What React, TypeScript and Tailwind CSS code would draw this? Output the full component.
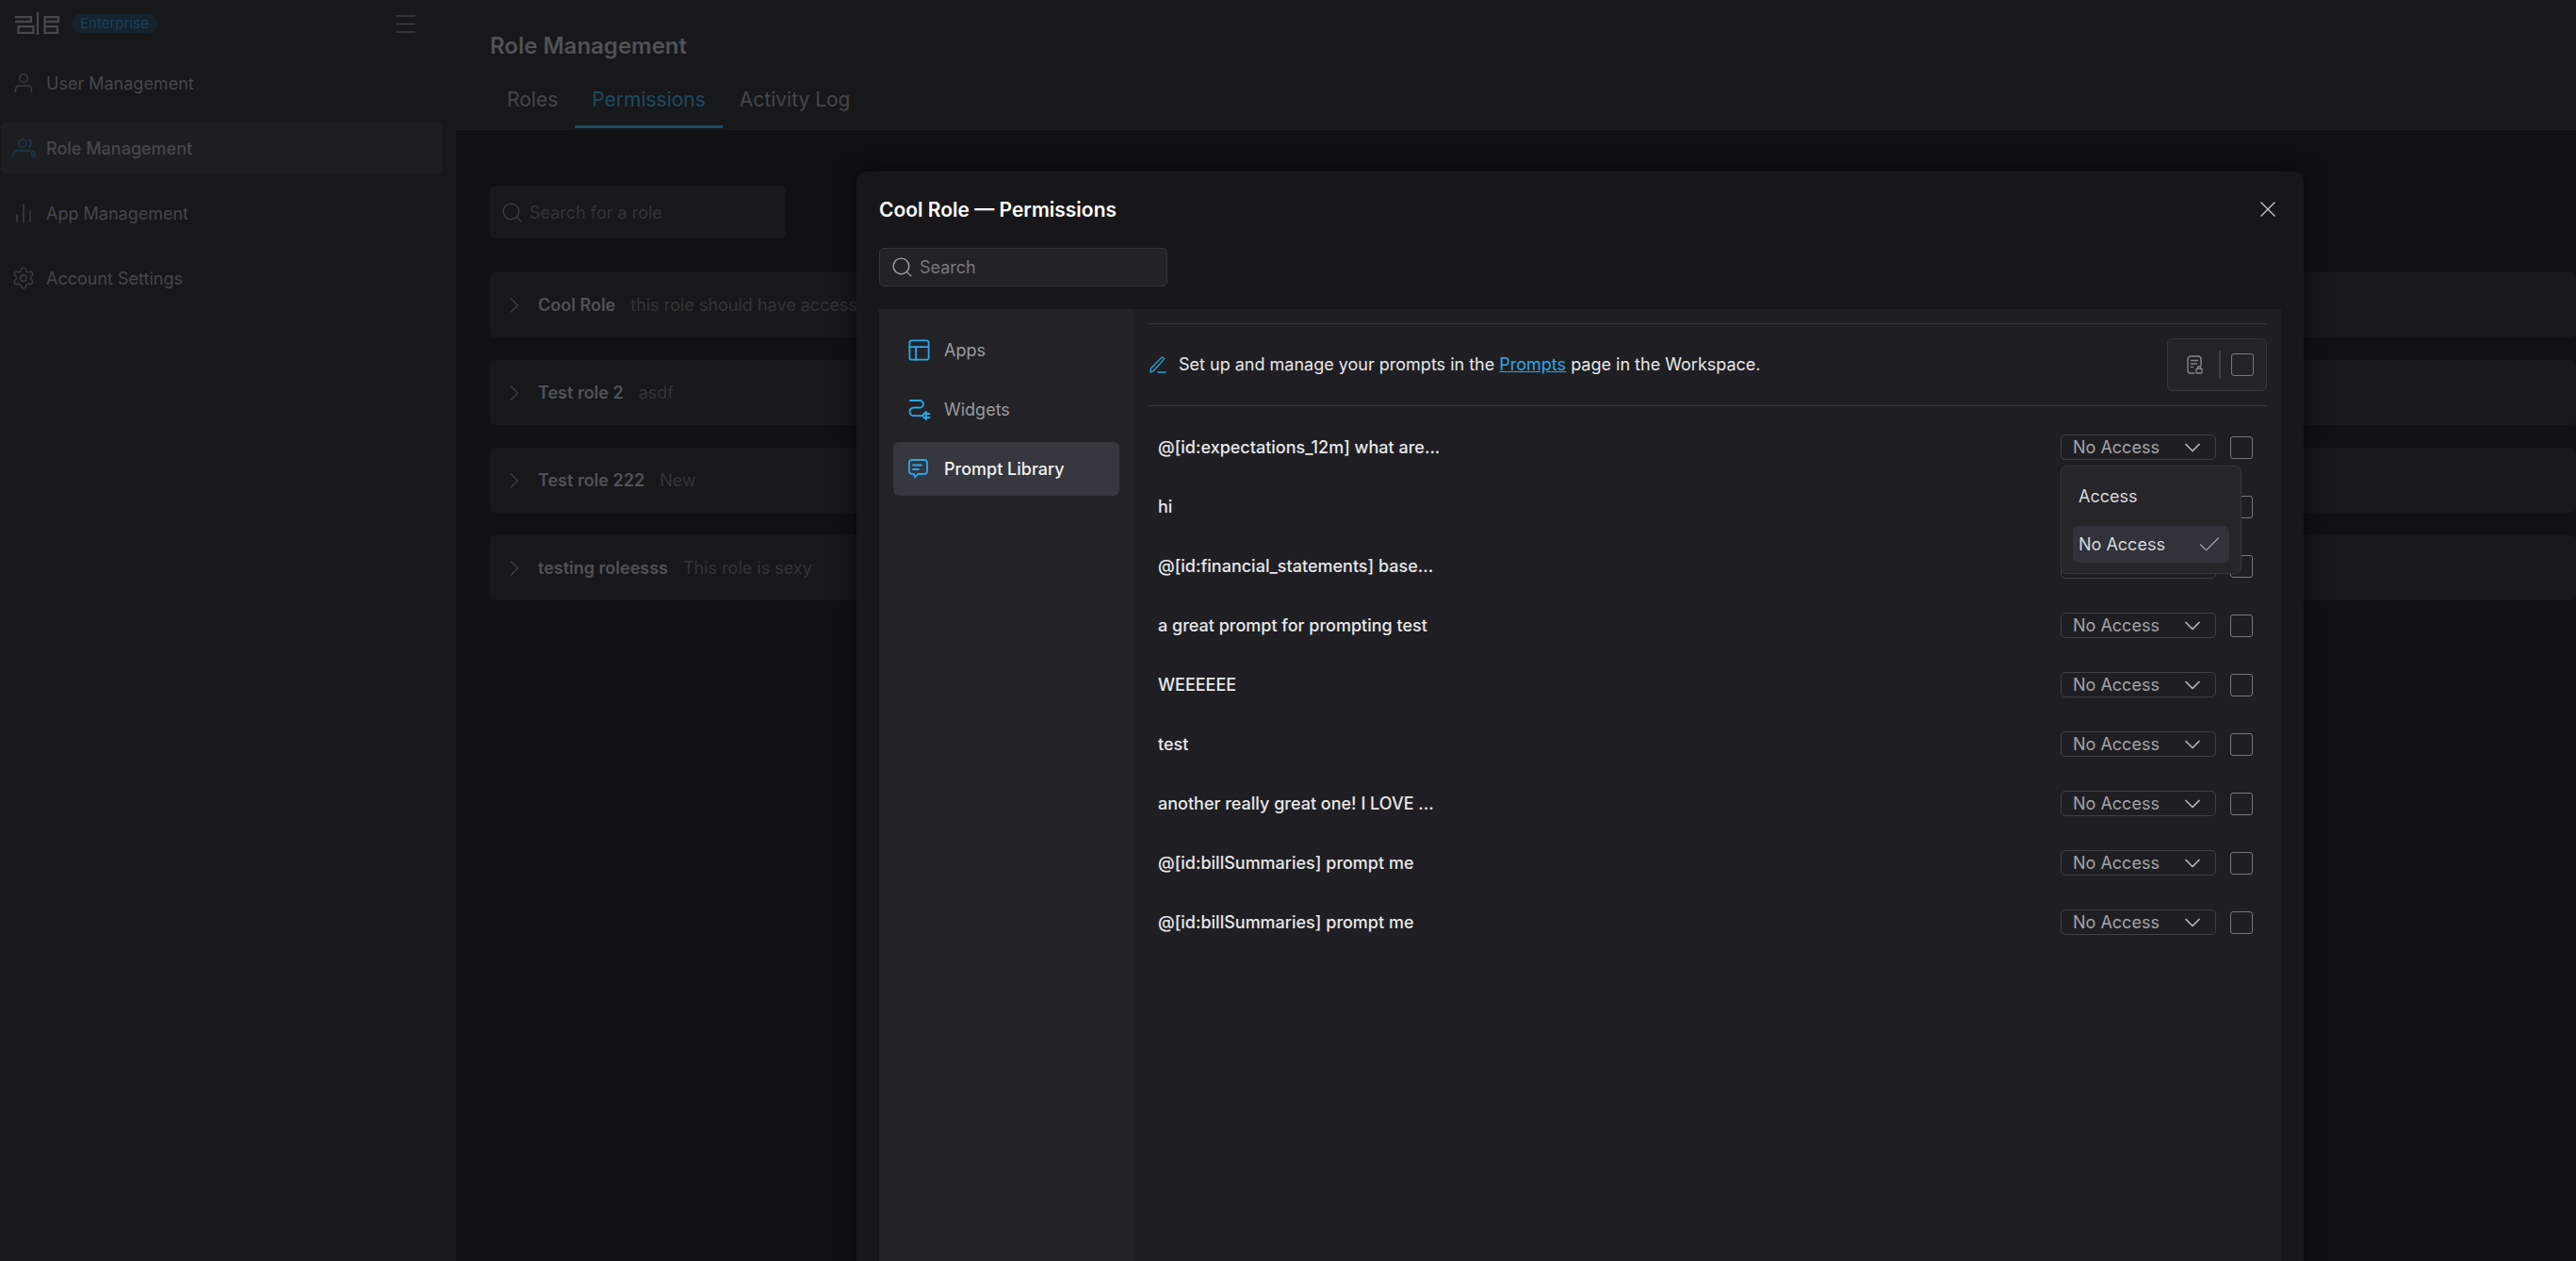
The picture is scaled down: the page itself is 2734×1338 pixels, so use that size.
import { Search, ChevronRight, ChevronDown, Check, X, Menu, Settings, PanelsTopLeft } from "lucide-react";

const roles = [
  { name: "Cool Role", desc: "this role should have access to all the cool things" },
  { name: "Test role 2", desc: "asdf" },
  { name: "Test role 222", desc: "New" },
  { name: "testing roleesss", desc: "This role is sexy" },
];

const prompts = [
  "@[id:expectations_12m] what are...",
  "hi",
  "@[id:financial_statements] base...",
  "a great prompt for prompting test",
  "WEEEEEE",
  "test",
  "another really great one! I LOVE ...",
  "@[id:billSummaries] prompt me",
  "@[id:billSummaries] prompt me",
];

function Logo() {
  return (
    <svg width="48" height="24" viewBox="0 0 48 24" fill="none" stroke="#47484b" strokeWidth="2.3">
      <path d="M0 5.200h17v4.800H0" />
      <path d="M3.500 15.200h16v6.600h-16z" />
      <path d="M24 0v24" strokeWidth="2.200" />
      <path d="M31.500 10h14.500V5.200H31.500v16.600h13.500v-6.600H31.500" />
    </svg>
  );
}

function UserIcon() {
  return (
    <svg width="20" height="20" viewBox="0 0 20 20" fill="none" stroke="#3c3e42" strokeWidth="1.4" strokeLinecap="round">
      <circle cx="10" cy="5" r="4.200" />
      <path d="M1.500 19.500V17a4 4 0 0 1 4-4h9a4 4 0 0 1 4 4v2.500" />
    </svg>
  );
}

function UsersIcon() {
  return (
    <svg width="25" height="20" viewBox="0 0 25 20" fill="none" stroke="#1d3a4c" strokeWidth="1.4" strokeLinecap="round">
      <circle cx="11" cy="5" r="4.200" />
      <path d="M1 19.500V17a4 4 0 0 1 4-4h12a4 4 0 0 1 4 4v2.500" />
      <path d="M17.500 1a4.300 4.300 0 0 1 0 8M21 13a4 4 0 0 1 3 4v2" />
    </svg>
  );
}

function BarsIcon() {
  return (
    <svg width="20" height="20" viewBox="0 0 20 20" fill="none" stroke="#3c3e42" strokeWidth="1.5" strokeLinecap="round">
      <path d="M3 19v-7M10 19V1M17 19V8" />
    </svg>
  );
}

function WidgetIcon() {
  return (
    <svg width="24" height="24" viewBox="0 0 24 24" fill="none" stroke="#2aa8e8" strokeWidth="1.8" strokeLinecap="round" strokeLinejoin="round">
      <path d="M2 2h10a4 4 0 0 1 4 4 3.500 3.500 0 0 1-4 3.500H6a4.300 4.300 0 0 0-4.500 4.500A4.300 4.300 0 0 0 6 18.200h9" />
      <path d="M15 18l4-4v8zM19 16h3.500M19 20h3.500" />
    </svg>
  );
}

function PromptIcon() {
  return (
    <svg width="21" height="21" viewBox="0 0 21 21" fill="none" stroke="#2aa8e8" strokeWidth="1.8" strokeLinecap="round" strokeLinejoin="round">
      <path d="M4 1h13a3 3 0 0 1 3 3v9a3 3 0 0 1-3 3h-7l-3 3.500L6 16H4a3 3 0 0 1-3-3V4a3 3 0 0 1 3-3z" />
      <path d="M5 6.500h9M5 11h6" />
    </svg>
  );
}

function PencilIcon() {
  return (
    <svg width="18" height="18" viewBox="0 0 18 18" fill="none" stroke="#2aa8e8" strokeWidth="1.3" strokeLinecap="round" strokeLinejoin="round">
      <path d="M1 17l.6-4.200L12.600 1.600a1.600 1.600 0 0 1 2.300 0 1.600 1.600 0 0 1 0 2.300L4 15.800z" />
      <path d="M9 17h8" />
    </svg>
  );
}

function DocLockIcon() {
  return (
    <svg width="17" height="20" viewBox="0 0 17 20" fill="none" stroke="#85868b" strokeWidth="1.4" strokeLinecap="round" strokeLinejoin="round" className="shrink-0">
      <path d="M8 19H4a3 3 0 0 1-3-3V4a3 3 0 0 1 3-3h8a3 3 0 0 1 3 3v7" />
      <path d="M4.500 5.500h7M4.500 9h6M4.500 12.500h2" />
      <rect x="10" y="14" width="6" height="5" rx="1" />
      <path d="M11.500 14v-1a1.500 1.500 0 0 1 3 0v1" />
    </svg>
  );
}

function SelectBox() {
  return (
    <div className="flex h-[27px] w-[165px] items-center justify-between rounded-[5px] border border-[#3f4046] pr-[10px] pl-[12px] text-[18px] text-[#a3a4a8]">
      <span>No Access</span>
      <ChevronDown className="h-[28px] w-[28px] shrink-0 text-[#b5b6ba]" strokeWidth={1.5} />
    </div>
  );
}

function PromptRow({ text }: { text: string }) {
  return (
    <div className="flex h-[63px] items-center justify-between pr-[15px] pl-[11px]">
      <span className="text-[18px] font-medium text-[#e8e8ea]">{text}</span>
      <div className="flex items-center gap-[15px]">
        <SelectBox />
        <div className="h-[24px] w-[24px] rounded-[3px] border border-[#77787d]" />
      </div>
    </div>
  );
}

export default function App() {
  return (
    <div className="relative flex h-screen w-full overflow-hidden bg-[#101113] font-['Inter',sans-serif]">
      {/* Sidebar */}
      <aside className="flex w-[484px] shrink-0 flex-col bg-[#17181a] pl-px">
        <div className="flex h-[50px] items-center justify-between pr-[39px] pl-[15px]">
          <div className="flex items-center gap-[12px]">
            <Logo />
            <span className="rounded-full bg-[#14232e] px-[9px] py-[1px] text-[15px] leading-[18px] text-[#1f3f54]">Enterprise</span>
          </div>
          <Menu className="h-[29px] w-[29px] text-[#3c3e42]" strokeWidth={1.3} />
        </div>
        <nav className="mt-[11px] flex flex-col gap-[15px] pr-[15px] text-[18px] text-[#45474b]">
          <div className="flex h-[54px] items-center gap-[11px] pl-[11px]">
            <div className="flex w-[26px] justify-center"><UserIcon /></div>
            <span>User Management</span>
          </div>
          <div className="flex h-[54px] items-center gap-[11px] rounded-[5px] bg-[#1d1e20] pl-[11px] font-medium">
            <div className="flex w-[26px] justify-center"><UsersIcon /></div>
            <span>Role Management</span>
          </div>
          <div className="flex h-[54px] items-center gap-[11px] pl-[11px]">
            <div className="flex w-[26px] justify-center"><BarsIcon /></div>
            <span>App Management</span>
          </div>
          <div className="flex h-[54px] items-center gap-[11px] pl-[11px]">
            <div className="flex w-[26px] justify-center"><Settings className="h-[26px] w-[26px] text-[#3c3e42]" strokeWidth={1.2} /></div>
            <span>Account Settings</span>
          </div>
        </nav>
      </aside>

      {/* Main */}
      <main className="flex min-w-0 flex-1 flex-col">
        <header className="h-[138px] border-b border-[#1b1c1e] bg-[#17181a] pl-[36px]">
          <h1 className="pt-[32px] text-[24px] leading-[34px] font-semibold text-[#505256]">Role Management</h1>
          <div className="mt-[4px] flex text-[21px] text-[#45474b]">
            <span className="flex h-[66px] items-center border-b-[3px] border-transparent px-[18px] pt-[9px]">Roles</span>
            <span className="flex h-[66px] items-center border-b-[3px] border-[#1f4a63] px-[18px] pt-[9px] text-[#1f4a63]">Permissions</span>
            <span className="flex h-[66px] items-center border-b-[3px] border-transparent px-[18px] pt-[9px]">Activity Log</span>
          </div>
        </header>
        <div className="pt-[59px] pl-[36px]">
          <div className="flex h-[56px] w-[314px] items-center gap-[6px] rounded-[5px] bg-[#17181a] pl-[11px] text-[18px] text-[#323437]">
            <Search className="h-[25px] w-[25px] text-[#3c3e42]" strokeWidth={1.3} />
            <span>Search for a role</span>
          </div>
          <div className="mt-[36px] flex flex-col gap-[24px]">
            {roles.map((r) => (
              <div key={r.name} className="flex h-[69px] items-center rounded-[5px] bg-[#17181a] pl-[12px] text-[18px]">
                <ChevronRight className="h-[28px] w-[28px] text-[#3c3e42]" strokeWidth={1.2} />
                <span className="ml-[11px] font-semibold text-[#505256]">{r.name}</span>
                <span className="ml-[16px] text-[#323437]">{r.desc}</span>
              </div>
            ))}
          </div>
        </div>
      </main>

      {/* Permissions modal */}
      <div className="absolute top-[182px] left-[909px] flex h-[1300px] w-[1536px] flex-col rounded-[10px] bg-[#17171a] px-[24px] shadow-[0_0_24px_rgba(0,0,0,0.55)]">
        <div className="flex h-[81px] items-center justify-between">
          <h2 className="pt-[1px] text-[21px] font-semibold text-white">Cool Role — Permissions</h2>
          <X className="mb-[2px] h-[28px] w-[28px] text-[#c4c5c9]" strokeWidth={1.2} />
        </div>
        <div className="flex h-[41px] w-[306px] items-center gap-[6px] rounded-[5px] border border-[#35363b] bg-[#232327] pl-[11px] text-[18px] text-[#77787d]">
          <Search className="h-[25px] w-[25px] text-[#a3a4a8]" strokeWidth={1.3} />
          <span>Search</span>
        </div>
        <div className="mt-[24px] flex min-h-0 flex-1">
          <div className="flex w-[270px] shrink-0 flex-col gap-[6px] bg-[#232327] pt-[15px] pl-[15px] text-[18px]">
            <div className="flex h-[57px] w-[240px] items-center gap-[13px] pl-[14px] text-[#9a9b9f]">
              <PanelsTopLeft className="h-[27px] w-[27px] text-[#2aa8e8]" strokeWidth={1.6} />
              <span>Apps</span>
            </div>
            <div className="flex h-[57px] w-[240px] items-center gap-[14px] pl-[16px] text-[#9a9b9f]">
              <WidgetIcon />
              <span>Widgets</span>
            </div>
            <div className="flex h-[57px] w-[240px] items-center gap-[17px] rounded-[6px] bg-[#36373f] pl-[16px] font-medium text-[#f0f0f2]">
              <PromptIcon />
              <span>Prompt Library</span>
            </div>
          </div>
          <div className="min-w-0 flex-1 bg-[#1f1f23] px-[15px] pt-[15px]">
            <div className="flex h-[88px] items-center justify-between border-y border-[#35363b]">
              <div className="mb-[1px] flex items-center gap-[13px] pl-[2px] text-[18px] text-[#e8e8ea]">
                <PencilIcon />
                <span>
                  Set up and manage your prompts in the <span className="text-[#2aa8e8] underline">Prompts</span> page in the Workspace.
                </span>
              </div>
              <div className="flex h-[56px] w-[106px] items-center rounded-[6px] border border-[#35363b] bg-[#232328] pl-[20px]">
                <DocLockIcon />
                <div className="mr-[11px] ml-[17px] h-[30px] w-[2px] bg-[#3f4046]" />
                <div className="h-[24px] w-[24px] shrink-0 rounded-[3px] border border-[#77787d]" />
              </div>
            </div>
            <div className="pt-[12px]">
              {prompts.map((p, i) => (
                <PromptRow key={i} text={p} />
              ))}
            </div>
          </div>
        </div>
      </div>

      {/* Open select menu */}
      <div className="absolute top-[494px] left-[2187px] flex h-[115px] w-[192px] flex-col rounded-[6px] border border-[#35363b] bg-[#25252a] px-[12px] pt-[11px] text-[18px] text-[#d8d8da]">
        <div className="flex h-[40px] items-center pl-[6px]">Access</div>
        <div className="mt-[12px] flex h-[39px] items-center justify-between rounded-[6px] bg-[#31323a] pr-[7px] pl-[6px]">
          <span>No Access</span>
          <Check className="h-[28px] w-[28px] text-[#a3a4a8]" strokeWidth={1.1} />
        </div>
      </div>
    </div>
  );
}
